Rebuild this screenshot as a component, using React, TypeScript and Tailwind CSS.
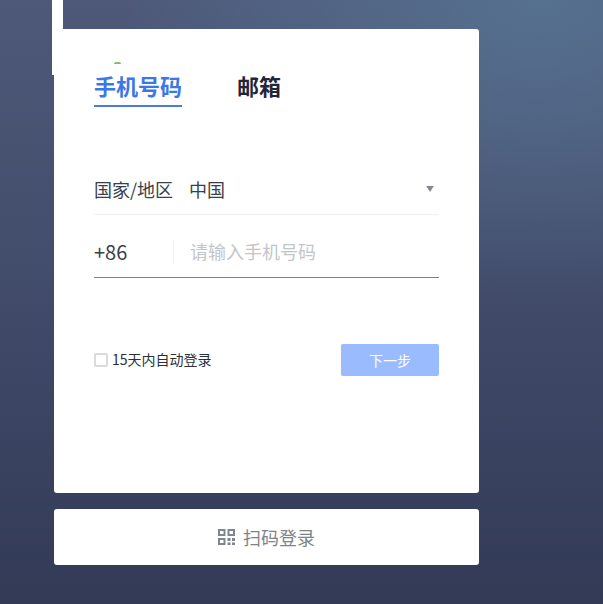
const font = "font-['Noto_Sans_CJK_SC','Noto_Sans',sans-serif]";

function QrIcon() {
    return (
        <svg width="17" height="16" viewBox="0 0 17 16" fill="none">
            <path fillRule="evenodd" clipRule="evenodd" d="M0 0h7.5v7H0V0zm2 2v3h3.5V2H2zM9.5 0H17v7H9.5V0zm2 2v3H15V2h-3.5zM0 9h7.5v7H0V9zm2 2v3h3.5v-3H2z" fill="#80848c" />
            <path d="M9.5 9h3v3h-3V9zM14 9h3v3h-3V9zM9.5 13.5h3V16h-3v-2.5zM14 13.5h3V16h-3v-2.5z" fill="#80848c" />
        </svg>
    );
}

export default function App() {
    return (
        <div className={`${font} relative h-[604px] w-full overflow-hidden pl-[54px] pt-[29px] bg-[radial-gradient(ellipse_420px_300px_at_540px_0px,#56708f_0%,rgba(86,112,143,0)_100%),linear-gradient(to_bottom,#4e5979_0%,#424c6b_45%,#323a56_100%)]`}>
            {/* white strip over the card corner */}
            <div className="absolute left-[52px] top-0 h-[75px] w-[11px] bg-white" />

            <div className="flex w-[425px] flex-col gap-4">
                <div className="h-[464px] rounded-[3px] bg-white px-10 pt-10">
                    <div className="relative flex items-start gap-[55px]">
                        <div className="absolute left-[20px] top-[-7px] h-[2px] w-[7px] rounded-t-full bg-[#7fbf6a]" />
                        <div className="border-b-2 border-[#4a7fd6] pb-1 text-[22px] leading-[32px] font-bold text-[#3b78e7]">手机号码</div>
                        <div className="text-[22px] leading-[32px] font-bold text-[#1f2638]">邮箱</div>
                    </div>

                    <div className="mt-[66px] flex h-[42px] items-start border-b border-[#eeeff1] pt-[3px] text-[18px] leading-[26px] text-[#3a3f4b]">
                        <span className="w-[95px]">国家/地区</span>
                        <span className="flex-1">中国</span>
                        <svg width="8" height="6" viewBox="0 0 9 7" className="mt-[10px] mr-[5px]">
                            <path d="M0 0h9L4.5 7z" fill="#85888f" />
                        </svg>
                    </div>

                    <div className="mt-[25px] flex h-[38px] items-start border-b border-[#4f8fb0]">
                        <span className="h-6 w-[80px] border-r border-[#f0f1f2] text-[20px] leading-[23px] text-[#3a3f4b]">+86</span>
                        <span className="pl-4 text-[18px] leading-[23px] text-[#c3c5c9]">请输入手机号码</span>
                    </div>

                    <div className="mt-[66px] flex items-center justify-between">
                        <label className="flex items-center gap-1 text-[14px] text-[#2b2f38]">
                            <span className="size-[14px] rounded-[2px] border-2 border-[#d9dadd]" />
                            <span className="pb-[2px]">15天内自动登录</span>
                        </label>
                        <button className="h-8 w-[98px] rounded-[2px] bg-[#9abcff] text-[14px] text-white">下一步</button>
                    </div>
                </div>

                <div className="flex h-14 items-center justify-center gap-2 rounded-[3px] bg-white text-[18px] text-[#7f838b]">
                    <QrIcon />
                    扫码登录
                </div>
            </div>
        </div>
    );
}
